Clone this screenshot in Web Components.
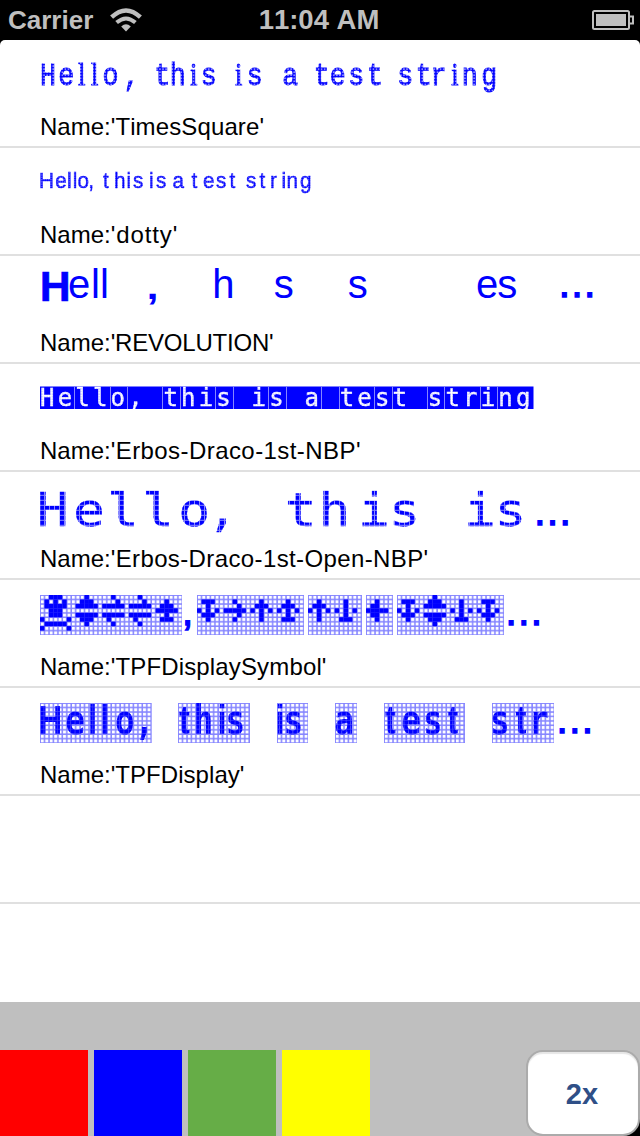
<!DOCTYPE html>
<html lang="en">
<head>
<meta charset="utf-8">
<title>Font list</title>
<style>
body{margin:0;background:#000;font-family:"Liberation Sans",sans-serif}
</style>
</head>
<body>
<font-app></font-app>
<script>
const define=(name,html,init)=>customElements.define(name,class extends HTMLElement{
  constructor(){super();this.attachShadow({mode:'open'}).innerHTML=html}
  connectedCallback(){if(init)init.call(this,this.shadowRoot)}
});

define('status-bar',`<style>
:host{display:grid;grid-template-columns:1fr auto 1fr;align-items:center;height:40px;background:#000;color:#bfbfbf;font-weight:bold;font-kerning:none}
.left{display:flex;align-items:center;padding-left:8px;font-size:26px;gap:16px;line-height:40px}
.time{font-size:27.5px;line-height:38px;padding-right:2px}
.right{display:flex;justify-content:flex-end;padding-right:6px}
svg{display:block}
</style>
<div class="left"><span>Carrier</span><svg width="34" height="24" viewBox="0 0 34 24" fill="none" stroke="#bfbfbf"><path d="M2.6 9.2Q17-4.2 31.4 9.2" stroke-width="4.4"/><path d="M7.6 14.6Q17 6.4 26.4 14.6" stroke-width="4"/><path d="M12.2 18.6Q17 14 21.8 18.6L17 23.4Z" fill="#bfbfbf" stroke="none"/></svg></div>
<div class="time">11:04 AM</div>
<div class="right"><svg width="42" height="22" viewBox="0 0 42 22"><rect x="1" y="2" width="36" height="18" rx="1.5" fill="none" stroke="#bfbfbf" stroke-width="2"/><rect x="4" y="5" width="30" height="12" fill="#bfbfbf"/><path d="M38 7.5h3v7h-3" fill="none" stroke="#bfbfbf" stroke-width="2"/></svg></div>`);

const SANS='"Liberation Sans"',MONO='"Liberation Mono"',DMONO='"DejaVu Sans Mono"',SERIF='"Liberation Serif"';
const pen=document.createElement('canvas').getContext('2d');
const bearing=(ch,font)=>{pen.font=font;return -pen.measureText(ch).actualBoundingBoxLeft};
const NS='http://www.w3.org/2000/svg';

/* One run of type: each letter's left ink edge sits on its entry in xs. */
function run(r){
  const s=r.stretch||1,t=document.createElementNS(NS,'text');
  let i=0,last=0;
  t.setAttribute('transform',`scale(${s} 1)`);
  t.setAttribute('fill',r.fill||'#00f');
  if(r.stroke){t.setAttribute('stroke',r.fill||'#00f');t.setAttribute('stroke-width',r.stroke)}
  t.setAttribute('style','white-space:pre;font-kerning:none;font-variant-ligatures:none');
  for(const ch of r.text){
    const alt=r.narrow&&r.narrow.includes(ch);
    const fam=alt?(r.alt||SERIF):r.family,weight=r.weight||400;
    const font=`${weight} ${r.size}px ${fam}`;
    const span=document.createElementNS(NS,'tspan');
    if(ch===' ')last+=8;else last=r.xs[i++];
    span.setAttribute('x',r.origin?last/s:(last/s-(ch===' '?0:bearing(ch,font))));
    span.setAttribute('y',r.y);
    span.setAttribute('style',`font:${font},monospace`);
    span.textContent=ch;
    t.append(span);
  }
  return t;
}

const GLYPHS={
  Q:['..###...','.#.#.#..','.#####..','..###...','..###...','#.....#.','.#####..','#.....#.'],
  V:['..#...','.###..','#####.','......','#####.','.###..','..#...'],
  X:['..#...','...#..','#####.','......','#####.','.#....','..#...'],
  O:['','..#...','.###..','#####.','..#...','.###..'],
  T:['','.###..','..#...','#.#.#.','.###..','..#...'],
  R:['','..#...','...#..','#####.','...#..','..#...'],
  U:['','..#...','.###..','#.#.#.','..#...','..#...'],
  S:['','..#...','..#...','#.#.#.','..#...','.###..'],
  Z:['','..#...','.###..','#.#.#.','..#...','.###..'],
  W:['','..#...','.##...','#####.','.##...','..#...']
};
const P=4.444;
const cells=(x,y,str)=>{let out='',c=0;for(const k of str){GLYPHS[k].forEach((row,j)=>{[...row].forEach((v,i)=>{if(v==='#')out+=`<rect x="${x+(c+i)*P}" y="${y+j*P}" width="4.5" height="4.5"/>`})});c+=k==='Q'?8:6}return out};
const mesh=(x,w)=>`<g transform="translate(${x} 15)"><rect width="${w}" height="40" fill="url(#mesh)"/></g>`;

const SAMPLES={
 TimesSquare:{gap:.12,dot:[3.05,1.55,41,23],runs:[{stroke:.9,stretch:.86,text:'Hello, this is a test string',family:MONO,size:31,y:45.3,narrow:'li',xs:[41.8,60,78,91,103.3,126,156,171.5,190,202.5,235,248.5,283,315.5,331.5,350,368.7,399,417.5,433,451.3,463.6,483]}]},
 dotty:{gap:.9,dot:[2.3,1.2,39.5,22.5],runs:[{stroke:.5,stretch:.92,text:'Hello, this is a test string',family:SANS,size:22.5,y:39.9,xs:[39.9,55.3,68,73.7,77.5,90,103,115,127.5,133,150,156,172.5,191.5,203,216,229.5,246,259.5,271,282.5,287.5,300]}]},
 REVOLUTION:{gap:-.2,runs:[{text:'H',family:SANS,weight:700,size:42,stretch:1.02,stroke:.5,y:44.8,xs:[41.7]},{text:'ell',family:SANS,size:40,y:42,xs:[69,93,102]},{text:',',family:SANS,weight:700,size:36,stretch:1.2,y:43,xs:[149]},{text:'h s s es ',family:SANS,size:40,y:42,xs:[214.3,274.7,348.7,477,498.3]},{text:'…',stroke:1.4,family:SANS,size:40,y:41.4,xs:[562]}]},
 'Erbos-Draco-1st-NBP':{gap:.43,bar:true,dot:[2.6,1.45,42,24.8],runs:[{stroke:.4,text:'Hello, this is a test string',family:DMONO,size:24,y:42.3,fill:'#fff',origin:true,
   xs:[...'Hello, this is a test string'].map((c,i)=>c===' '?null:40+17.625*i).filter(v=>v!==null)}]},
 'Erbos-Draco-1st-Open-NBP':{gap:.38,square:[5,4,40,18.8],runs:[{stroke:.3,text:'Hello, this is',family:DMONO,size:46.5,stretch:1.14,y:53.6,xs:[40.2,75.4,110.4,145.4,181.6,216.5,287,323,362.5,393,468.5,499]}],
   plain:[{stroke:1.4,text:'…',family:SANS,size:40,y:53.1,xs:[537.5]}]},
 TPFDisplaySymbol:{gap:.15,extra:mesh(40,142)+mesh(197,107)+mesh(308,54)+mesh(366,27)+mesh(397,107)+`<g fill="#00f">${cells(40,15,'QVXXO')+cells(197,15,'TRUZ')+cells(308,15,'US')+cells(366,15,'W')+cells(397,15,'TVST')}</g>`,
   plain:[{stroke:1.4,text:',',family:SANS,size:40,y:45.1,xs:[185]},{stroke:1.4,text:'…',family:SANS,size:40,y:45.1,xs:[508.7]}]},
 TPFDisplay:{gap:.05,extra:mesh(40,111.7)+mesh(178,72)+mesh(277,31)+mesh(335,22)+mesh(384,81)+mesh(492,62),
   square:[P,3.9,40,15],runs:[{text:'Hello, this is a test str',family:DMONO,weight:700,size:41,stretch:.8,y:45.8,narrow:'Hlit',alt:SANS,xs:[40,66,89.5,102,115.7,140,179,196,219,228,277,286,335,385,402,425.5,447.5,492.5,515.5,533]}],
   plain:[{stroke:1.4,text:'…',family:SANS,size:40,y:45.1,xs:[559.7]}]}
};

define('font-sample',`<style>:host{display:block;height:72px}svg{display:block}</style><div></div>`,function(root){
  const d=SAMPLES[this.getAttribute('face')];
  let mask='',defs=`<pattern id="mesh" width="${P}" height="${P}" patternUnits="userSpaceOnUse"><rect width="${P}" height="${P}" fill="#8585ff"/><rect x=".9" y=".9" width="2.9" height="2.9" fill="#fff"/></pattern>`;
  if(d.dot){const[p,r,x,y]=d.dot;mask=`<pattern id="p" x="${x}" y="${y}" width="${p}" height="${p}" patternUnits="userSpaceOnUse"><rect width="${p}" height="${p}" fill="#222"/><circle cx="${p/2}" cy="${p/2}" r="${r}" fill="#fff"/></pattern>`}
  if(d.square){const[p,w,x,y]=d.square;mask=`<pattern id="p" x="${x}" y="${y}" width="${p}" height="${p}" patternUnits="userSpaceOnUse"><rect width="${p}" height="${p}" fill="#777"/><rect width="${w}" height="${w}" fill="#fff"/></pattern>`}
  if(mask)mask+=`<mask id="m" maskUnits="userSpaceOnUse" x="0" y="0" width="640" height="72"><rect width="640" height="72" fill="url(#p)"/></mask>`;
  let bar='';
  if(d.bar){bar='<rect x="40" y="22.5" width="493.5" height="22.5" fill="#00f"/>';[2,4,5,7,8,10,11,13,14,16,17,19,20,22,23,25,26].forEach(k=>bar+=`<rect x="${Math.round(40+17.625*k-1)}" y="22" width="1" height="23" fill="#8585ff"/>`)}
  root.querySelector('div').innerHTML=`<svg width="640" height="72"><defs>${defs+mask}<clipPath id="c"><rect width="640" height="${d.bar?45:72}"/></clipPath></defs>${bar}${d.extra||''}<g class="a" clip-path="url(#c)"><g class="t" ${mask?'mask="url(#m)"':''}></g></g></svg>`;
  const g=root.querySelector('.t'),a=root.querySelector('.a');
  (d.runs||[]).forEach(r=>g.append(run(r)));
  (d.plain||[]).forEach(r=>a.append(run(r)));
});

define('font-row',`<style>
:host{display:grid;grid-template-rows:72px 1fr;box-sizing:border-box;height:108px;border-bottom:2px solid #e0e0e0}
.name{padding:1px 0 0 40px;font-size:24px;line-height:28px;color:#000;font-kerning:none;white-space:nowrap}
</style><div class="sample"><slot></slot></div><div class="name"></div>`,function(root){
  const n=this.getAttribute('name');
  if(n)root.querySelector('.name').innerHTML=`Name:<span style="letter-spacing:${SAMPLES[n].gap}px">'${n}'</span>`;
});

define('color-swatch',`<style>:host{display:block;width:88px;height:86px;background:var(--c)}</style>`);
define('zoom-button',`<style>
:host{display:block;margin-left:auto;width:114px;height:86px;background:linear-gradient(135deg,#bfbfbf 70%,#000 95%)}
button{display:block;box-sizing:border-box;width:114px;height:86px;padding:2px 2px 0 0;border:2px solid #ababab;border-radius:17px;background:#fff;box-shadow:inset 0 2px 1px #e6e6e6;color:#2f4f87;font:bold 29px "Liberation Sans",sans-serif;text-align:center}
</style><button><slot></slot></button>`);
define('tool-bar',`<style>:host{display:flex;box-sizing:border-box;height:134px;padding-top:48px;gap:6px;background:#bfbfbf}</style><slot></slot>`);

define('font-app',`<style>
:host{display:flex;flex-direction:column;width:640px;height:1136px;overflow:hidden;background:#000}
main{height:962px;overflow:hidden;background:#fff;border-radius:5px 5px 0 0}
</style>
<status-bar></status-bar>
<main>${Object.keys(SAMPLES).map(n=>`<font-row name="${n}"><font-sample face="${n}"></font-sample></font-row>`).join('')}<font-row></font-row></main>
<tool-bar><color-swatch style="--c:#f00"></color-swatch><color-swatch style="--c:#00f"></color-swatch><color-swatch style="--c:#66ad47"></color-swatch><color-swatch style="--c:#ff0"></color-swatch><zoom-button>2x</zoom-button></tool-bar>`);
</script>
</body>
</html>
